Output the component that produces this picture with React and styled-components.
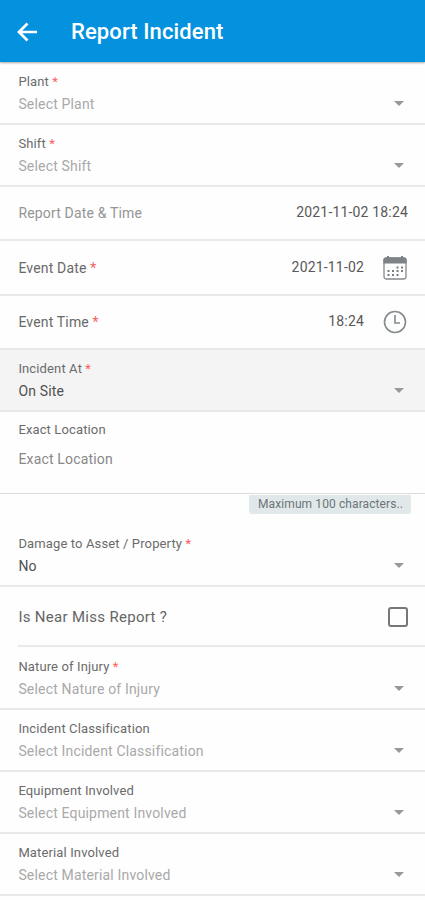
import React from 'react';
import styled, { createGlobalStyle } from 'styled-components';

const GlobalStyle = createGlobalStyle`
  * { box-sizing: border-box; }
  body { margin: 0; background: #fefefe; font-family: Roboto, sans-serif; }
`;

const Screen = styled.main`
  width: 425px;
  height: 900px;
  overflow: hidden;
  display: flex;
  flex-direction: column;
  background: #fefefe;
`;

const Header = styled.header`
  height: 62px;
  flex: none;
  display: flex;
  align-items: center;
  gap: 33px;
  padding: 1px 17px 0;
  background: #0492df;
  color: #fff;
  box-shadow: 0 1px 2px rgba(0, 0, 0, 0.35);
`;

const Title = styled.h1`
  margin: 0;
  font-size: 22px;
  line-height: 28px;
  font-weight: 500;
  letter-spacing: 0.1px;
`;

const Row = styled.section`
  height: ${(p) => p.$h}px;
  flex: none;
  display: flex;
  align-items: center;
  justify-content: space-between;
  padding: 0 17px 0 18.4px;
  border-bottom: 2px solid #e9e9e9;
  background: ${(p) => (p.$shaded ? '#f4f4f4' : 'transparent')};
`;

const SelectRow = styled(Row)`
  align-items: flex-end;
  padding: 0 21.5px 8px 18.4px;
`;

const TextAreaRow = styled(Row)`
  align-items: flex-start;
  padding-top: 8px;
  border-bottom-width: 1px;
  border-bottom-color: #dcdcdc;
`;

const CheckRow = styled(Row)`
  margin-left: 18.4px;
  padding: 2px 17px 0 0;
`;

const Stack = styled.div`
  display: flex;
  flex-direction: column;
  gap: ${(p) => p.$gap || 1}px;
`;

const Label = styled.span`
  font-size: 13px;
  line-height: 20px;
  letter-spacing: 0.13px;
  color: #6b6b6b;
  white-space: nowrap;
`;

const Value = styled.span`
  font-size: 14px;
  line-height: 22px;
  letter-spacing: 0.17px;
  color: ${(p) => p.$color || '#a9a9a9'};
  white-space: nowrap;
`;

const Reading = styled(Value)`
  margin-bottom: 2px;
  color: #585858;
`;

const CheckLabel = styled(Value)`
  font-size: 15px;
  letter-spacing: 0.3px;
`;

const Star = styled.span`
  color: #fa5f5f;
`;

const Trailing = styled.div`
  display: flex;
  align-items: center;
  gap: 18px;
`;

const Caret = styled.i`
  width: 0;
  height: 0;
  margin-bottom: 9px;
  border: 5px solid transparent;
  border-top-color: #989898;
  border-bottom: 0;
`;

const Checkbox = styled.span`
  width: 20px;
  height: 20px;
  border: 2px solid #777;
  border-radius: 3px;
`;

const HintLine = styled.div`
  height: 31px;
  flex: none;
  display: flex;
  justify-content: flex-end;
  align-items: flex-start;
  padding: 1px 14px 0 0;
`;

const Hint = styled.span`
  width: 162px;
  height: 19px;
  padding-left: 9px;
  border-radius: 0 0 3px 3px;
  background: #e1e8ea;
  color: #6b7478;
  font-size: 12px;
  line-height: 19px;
  letter-spacing: 0.1px;
  white-space: nowrap;
`;

const BackIcon = () => (
  <svg width="21" height="20" viewBox="0 0 21 20" fill="none" stroke="#fff" strokeWidth="2.7">
    <path d="M20 10H2.500M10.500 1.500 2 10l8.500 8.500" />
  </svg>
);

const CalendarIcon = () => (
  <svg width="26" height="26" viewBox="0 0 26 26" fill="none">
    <rect x="2" y="3" width="22" height="21" rx="2.5" stroke="#858b8e" strokeWidth="1.3" />
    <path d="M1.400 8.500V5a2.500 2.500 0 0 1 2.500-2.500h18.200A2.500 2.500 0 0 1 24.600 5v3.500z" fill="#7c8285" />
    <path d="M6 1v3M20 1v3" stroke="#7c8285" strokeWidth="2" />
    <path d="M14.500 12.500h6.500M5.500 16h15.500M5.500 20h11.500" stroke="#777d80" strokeWidth="2" strokeDasharray="2 2.500" />
  </svg>
);

const ClockIcon = () => (
  <svg width="26" height="26" viewBox="0 0 26 26" fill="none" stroke="#858a8d" strokeWidth="1.6">
    <circle cx="13" cy="13" r="10.500" />
    <path d="M13 6v8h5" />
  </svg>
);

const Required = () => <Star> *</Star>;

const SelectField = ({ label, value, required, filled, height = 62, shaded }) => (
  <SelectRow $h={height} $shaded={shaded}>
    <Stack>
      <Label>{label}{required && <Required />}</Label>
      <Value $color={filled && '#505050'}>{value}</Value>
    </Stack>
    <Caret />
  </SelectRow>
);

export default function App() {
  return (
    <>
      <GlobalStyle />
      <Screen>
        <Header>
          <BackIcon />
          <Title>Report Incident</Title>
        </Header>
        <SelectField label="Plant" value="Select Plant" required height={63} />
        <SelectField label="Shift" value="Select Shift" required />
        <Row $h={54}>
          <Value $color="#959595">Report Date &amp; Time</Value>
          <Reading>2021-11-02 18:24</Reading>
        </Row>
        <Row $h={55}>
          <Value $color="#696969">Event Date<Required /></Value>
          <Trailing>
            <Reading>2021-11-02</Reading>
            <CalendarIcon />
          </Trailing>
        </Row>
        <Row $h={54}>
          <Value $color="#696969">Event Time<Required /></Value>
          <Trailing>
            <Reading>18:24</Reading>
            <ClockIcon />
          </Trailing>
        </Row>
        <SelectField label="Incident At" value="On Site" required filled shaded />
        <TextAreaRow $h={82}>
          <Stack $gap={8}>
            <Label>Exact Location</Label>
            <Value $color="#888">Exact Location</Value>
          </Stack>
        </TextAreaRow>
        <HintLine>
          <Hint>Maximum 100 characters..</Hint>
        </HintLine>
        <SelectField label="Damage to Asset / Property" value="No" required filled />
        <CheckRow $h={60}>
          <CheckLabel $color="#656565">Is Near Miss Report ?</CheckLabel>
          <Checkbox />
        </CheckRow>
        <SelectField label="Nature of Injury" value="Select Nature of Injury" required height={63} />
        <SelectField label="Incident Classification" value="Select Incident Classification" />
        <SelectField label="Equipment Involved" value="Select Equipment Involved" />
        <SelectField label="Material Involved" value="Select Material Involved" />
      </Screen>
    </>
  );
}
